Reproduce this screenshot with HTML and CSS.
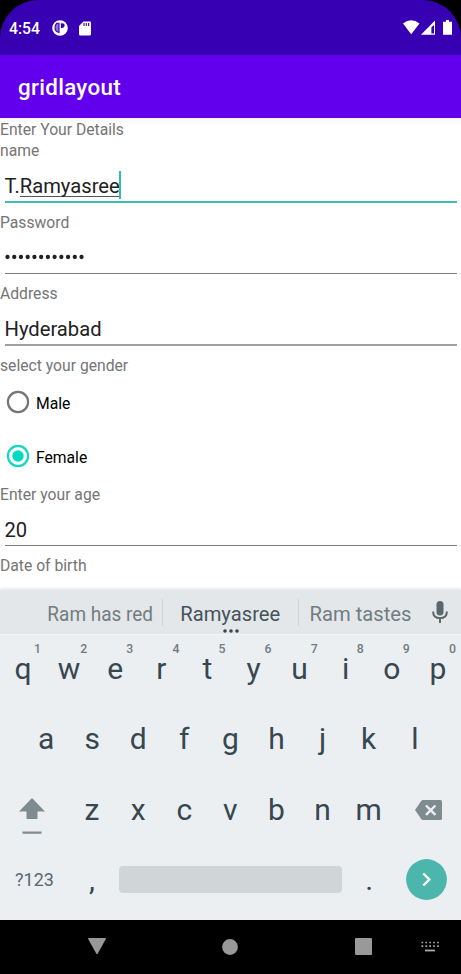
FILE: index.html
```html
<!DOCTYPE html>
<html lang="en">
<head>
<meta charset="utf-8">
<title>gridlayout</title>
<link rel="stylesheet" href="styles.css">
</head>
<body>
<div class="screen">
  <header class="status">
    <span class="clock">4:54</span>
    <svg class="status-p" width="16" height="16" viewBox="0 0 16 16"><circle cx="8" cy="8" r="7.800" fill="#fff"/><path d="M7 3.300H4.600Q3 5 3 7.700 3 11.500 7 12.500z" fill="#8f73d4" stroke="#3700b3" stroke-width="1.100"/><path d="M8.900 3.200H10q2.600 0 2.600 2.300T10 7.900H8.900z" fill="#3700b3"/></svg>
    <svg class="status-sd" width="12" height="15" viewBox="0 0 12 15"><path fill="#fff" d="M4.400.5H11q1 0 1 1V13q0 1.500-1.300 1.500H1.300Q0 14.500 0 13V5z"/><path stroke="#3700b3" stroke-width="1.100" d="M5 2v3M7.300 2v3M9.600 2v3"/></svg>
    <svg class="status-right" width="50" height="15" viewBox="0 0 50 15"><path fill="#fff" d="M0 3.500Q8.200-2.800 16.500 3.500L8.200 14.200z"/><path fill="#fff" fill-rule="evenodd" d="M32 .5V14.800H18zM31 5v8.500h-2.600V7.200z"/><path fill="#fff" d="M40 1.800h3V0h3v1.800h3V14.800h-9z"/></svg>
  </header>
  <div class="appbar">gridlayout</div>
  <main class="form">
    <div class="label">Enter Your Details</div>
    <div class="label">name</div>
    <div class="field focused"><span>T.<span class="composing">Ramyasree</span></span><i class="caret"></i></div>
    <div class="label">Password</div>
    <div class="field"><svg class="dots" width="82" height="6" viewBox="0 0 82 6"><path d="M2.500 3H80" stroke="#212121" stroke-width="4.300" stroke-linecap="round" stroke-dasharray="0 6.730"/></svg></div>
    <div class="label">Address</div>
    <div class="field thick">Hyderabad</div>
    <div class="label">select your gender</div>
    <div class="option"><svg width="24" height="24" viewBox="0 0 24 24"><circle cx="12" cy="12" r="10.100" fill="none" stroke="#757575" stroke-width="2.200"/></svg><span>Male</span></div>
    <div class="option"><svg width="24" height="24" viewBox="0 0 24 24"><circle cx="12" cy="12" r="10.100" fill="none" stroke="#16d6c2" stroke-width="2.200"/><circle cx="12" cy="12" r="5.700" fill="#03dac5"/></svg><span>Female</span></div>
    <div class="label">Enter your age</div>
    <div class="field">20</div>
    <div class="label">Date of birth</div>
  </main>
  <section class="keyboard">
    <div class="suggestions">
      <span class="word first"><b>Ram has red</b></span>
      <span class="word current">Ramyasree<svg class="more" width="18" height="4" viewBox="0 0 18 4"><path d="M3 2H16" stroke="#37474f" stroke-width="3.600" stroke-linecap="round" stroke-dasharray="0 6"/></svg></span>
      <span class="word last">Ram tastes</span>
      <svg class="mic" width="16" height="23" viewBox="0 0 16 23"><rect x="4.500" y="0" width="7" height="14.500" rx="3.500" fill="#5b676d"/><path d="M1.100 10.500q0 6.700 6.900 6.700t6.900-6.700M8 17v5" fill="none" stroke="#5b676d" stroke-width="2"/></svg>
    </div>
    <div class="keys">
      <div class="row top"><span>q<sup>1</sup></span><span>w<sup>2</sup></span><span>e<sup>3</sup></span><span>r<sup>4</sup></span><span>t<sup>5</sup></span><span>y<sup>6</sup></span><span>u<sup>7</sup></span><span>i<sup>8</sup></span><span>o<sup>9</sup></span><span>p<sup>0</sup></span></div>
      <div class="row middle"><span>a</span><span>s</span><span>d</span><span>f</span><span>g</span><span>h</span><span>j</span><span>k</span><span>l</span></div>
      <div class="row lower">
        <svg class="shift" width="26" height="36" viewBox="0 0 26 36"><path fill="#7f8c8f" d="M13 0L26 13.500H18.500V21H7.500V13.500H0zM3.500 33.500H22.500v2.200H3.500z"/></svg>
        <span>z</span><span>x</span><span>c</span><span>v</span><span>b</span><span>n</span><span>m</span>
        <svg class="delete" width="27" height="20" viewBox="0 0 27 20"><path fill="#7f8c8f" d="M8 0H25.500Q27 0 27 1.500V18.500Q27 20 25.500 20H8Q7 20 6.200 19L0 10 6.200 1Q7 0 8 0z"/><path stroke="#ebeff2" stroke-width="2.400" d="M11 5.500l9.400 9.400M20.400 5.500l-9.400 9.400"/></svg>
      </div>
      <div class="row bottom">
        <span class="symbols">?123</span><span>,</span><div class="space"></div><span>.</span>
        <svg class="enter" width="41" height="41" viewBox="0 0 41 41"><circle cx="20.500" cy="20.500" r="20.400" fill="#4db6ac"/><path d="M17.300 14.500l6 6-6 6" fill="none" stroke="#fff" stroke-width="2.400"/></svg>
      </div>
    </div>
  </section>
  <nav class="nav">
    <svg width="18" height="17" viewBox="0 0 18 17"><path fill="#999" d="M.8 0H17.200Q18.300 0 17.800 1L9.800 15.500Q9 16.800 8.200 15.500L.2 1Q-.3 0 .8 0z"/></svg>
    <svg width="16" height="16" viewBox="0 0 16 16"><circle cx="8" cy="8" r="7.900" fill="#999"/></svg>
    <svg width="17" height="17" viewBox="0 0 17 17"><rect width="17" height="17" rx="1" fill="#999"/></svg>
    <svg width="18" height="11" viewBox="0 0 18 11"><path d="M.5 1.500H18M.5 5.200H18" stroke="#aaa" stroke-width="1.700" stroke-dasharray="1.700 2.200"/><path d="M4 9.500H14" stroke="#aaa" stroke-width="1.800"/></svg>
  </nav>
</div>
</body>
</html>
```
FILE: styles.css
```css
* { box-sizing: border-box; }
body { margin: 0; background: #000; font-family: Roboto, "Liberation Sans", sans-serif; }
svg { display: block; flex: none; overflow: visible; }
.screen { width: 461px; height: 974px; display: flex; flex-direction: column; overflow: hidden; }
.status { height: 55px; flex: none; display: flex; align-items: center; padding: 1px 8px 0 9px; background: #3700b3; color: #fff; border-radius: 38px 38px 0 0; }
.clock { font-size: 15.700px; font-weight: 500; width: 31px; }
.status-p { margin-left: 12px; }
.status-sd { margin-left: 11px; }
.status-right { margin-left: auto; margin-top: -1px; }
.appbar { height: 63px; flex: none; display: flex; align-items: center; padding: 1px 18px 0; background: #6200ee; color: #fff; font-size: 22.400px; font-weight: 500; letter-spacing: .3px; }
.form { height: 472px; flex: none; background: linear-gradient(#f4f4f4, #fff 6px); overflow: hidden; }
.label { height: 21.100px; line-height: 24.600px; font-size: 15.700px; color: #757575; white-space: nowrap; }
.field { height: 50.500px; display: flex; align-items: center; margin: 0 4.500px; padding-top: 2px; background: linear-gradient(#7a7a7a, #7a7a7a) 0 41px / 100% 1px no-repeat; color: #212121; font-size: 20.200px; }
.focused { background: linear-gradient(#3dbdb3, #3dbdb3) 0 41px / 100% 2px no-repeat; }
.thick { background: linear-gradient(#a0a0a0, #a0a0a0) 0 41px / 100% 2px no-repeat; padding-top: 1px; }
.dots { margin-top: -2px; }
.composing { border-bottom: 1px solid #555; display: inline-block; line-height: 19px; }
.caret { width: 2px; height: 28px; margin: -2px 0 0 -1px; background: #30bcb0; }
.option { height: 53.800px; display: flex; align-items: center; gap: 6px; padding: 1px 0 0 6px; font-size: 15.700px; color: #000; }
.option span { padding-top: 2px; }
.keyboard { height: 330px; flex: none; background: #ebeff2; color: #37474f; box-shadow: 0 -1px 3px #ddd; }
.suggestions { height: 44.500px; display: grid; grid-template-columns: 161.500px 137.500px 121px 41px; align-items: center; padding-top: 1px; background: #e3e7ea; border-bottom: 1px solid #f3f5f6; font-size: 20.200px; }
.word { position: relative; height: 27px; line-height: 30px; text-align: center; white-space: nowrap; color: #727c80; }
.first { padding-left: 39px; }
.first b { display: inline-block; font-weight: 400; transform: scaleX(.94); }
.current { color: #455359; border-left: 1px solid #cfd4d7; border-right: 1px solid #cfd4d7; }
.last { padding-left: 2px; }
.more { position: absolute; left: 59px; bottom: -7px; }
.mic { margin-left: 12px; }
.keys { display: grid; grid-template-rows: repeat(4, 70.300px); font-size: 30px; }
.row { display: flex; align-items: center; padding-bottom: 1px; }
.row span { position: relative; width: 46.100px; text-align: center; line-height: 36px; }
.row sup { position: absolute; right: 5px; top: -9px; font-size: 12.300px; line-height: 14px; font-weight: 500; color: #727c80; }
.middle { padding-left: 23px; }
.lower { padding-left: 19px; }
.shift { margin: 13px 24px 0 0; }
.delete { margin-left: 23px; }
.row .symbols { width: 69px; font-size: 18px; color: #5b676d; }
.space { width: 223px; height: 27px; margin: -1px 4px 0; border-radius: 4px; background: #d0d5d8; }
.enter { margin: -1px 0 0 14px; }
.nav { height: 54px; flex: none; display: flex; align-items: center; padding: 0 0 1px 88px; background: #000; }
.nav svg:nth-child(2) { margin-left: 116px; }
.nav svg:nth-child(3) { margin-left: 117px; }
.nav svg:nth-child(4) { margin-left: 49px; }
```
